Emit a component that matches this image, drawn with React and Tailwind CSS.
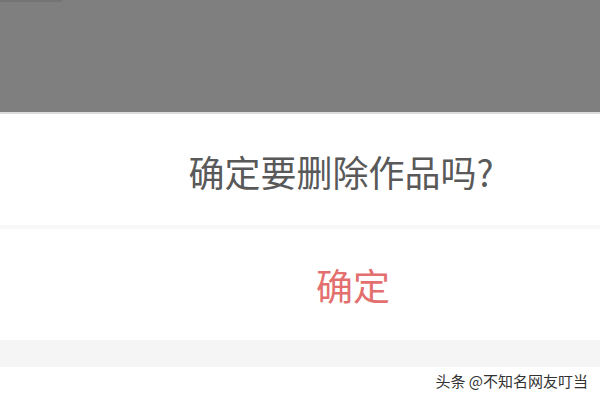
export default function App() {
  return (
    <div className="w-[600px] h-[400px] overflow-hidden bg-white flex flex-col font-['Noto_Sans_CJK_SC','Noto_Sans',sans-serif]">
      {/* dimmed page behind the sheet */}
      <div className="h-[112px] bg-[#7f7f7f] flex flex-col">
        <div className="w-[62px] h-[2px] bg-[#747474]" />
      </div>
      <div className="h-[2px] bg-[#dcdcdc]" />

      <div className="h-[111px] flex items-center justify-center pl-[82px] pt-[3px]">
        <span className="text-[36px] leading-none text-[#595959]">确定要删除作品吗?</span>
      </div>

      <div className="h-[4px] bg-[#f8f8f8]" />

      <button type="button" className="h-[111px] flex items-center justify-center pl-[106px] pt-[1px]">
        <span className="text-[37px] leading-none text-[#e46f6f]">确定</span>
      </button>

      <div className="h-[27px] bg-[#f5f5f5]" />

      <div className="flex-1 flex justify-end pr-[12px] pt-[6px]">
        <span className="text-[15px] leading-none text-[#333]">头条 @不知名网友叮当</span>
      </div>
    </div>
  );
}
